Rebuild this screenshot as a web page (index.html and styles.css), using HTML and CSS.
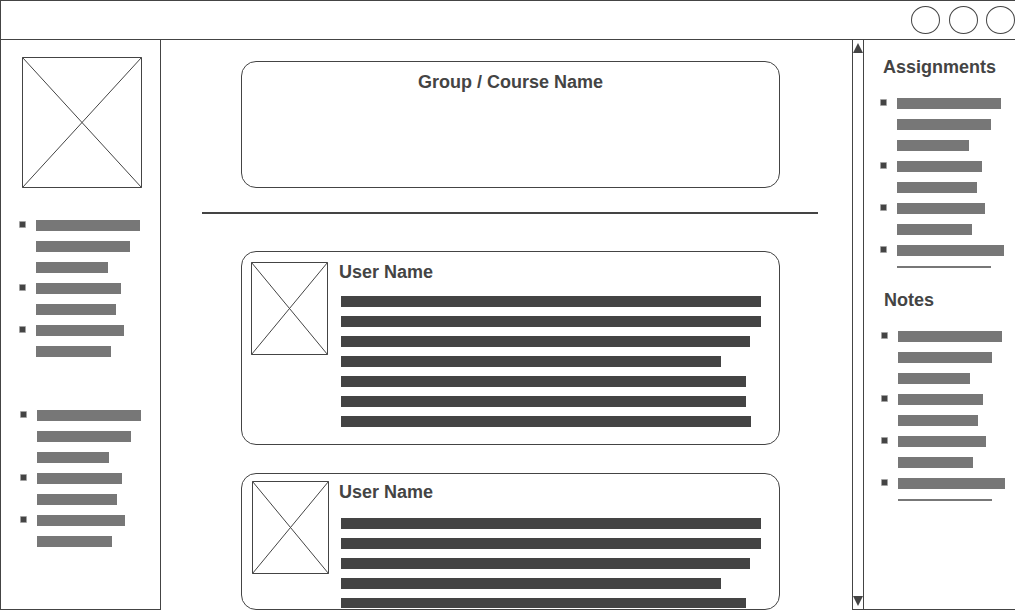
FILE: index.html
```html
<!DOCTYPE html>
<html lang="en">
<head>
<meta charset="utf-8">
<meta name="viewport" content="width=device-width, initial-scale=1">
<title>Group / Course Name</title>
<link rel="stylesheet" href="styles.css">
</head>
<body>
<div class="app">
  <header class="topbar">
    <button class="round" type="button" aria-label="Messages"></button>
    <button class="round" type="button" aria-label="Alerts"></button>
    <button class="round round-last" type="button" aria-label="Account"></button>
  </header>

  <nav class="sidebar" aria-label="Main">
    <svg class="placeholder portrait" viewBox="0 0 120 131" preserveAspectRatio="none" aria-hidden="true"><path d="M.5 .5H119.5V130.5H.5ZL119.5 130.5M119.5 .5L.5 130.5"/></svg>
    <ul class="list">
      <li><span class="bar w104"></span><span class="bar w94"></span><span class="bar w72"></span></li>
      <li><span class="bar w85"></span><span class="bar w80"></span></li>
      <li><span class="bar w88"></span><span class="bar w75"></span></li>
    </ul>
    <ul class="list list-second">
      <li><span class="bar w104"></span><span class="bar w94"></span><span class="bar w72"></span></li>
      <li><span class="bar w85"></span><span class="bar w80"></span></li>
      <li><span class="bar w88"></span><span class="bar w75"></span></li>
    </ul>
  </nav>

  <main class="feed">
    <section class="card banner"><h1 class="title">Group / Course Name</h1></section>
    <hr class="divider">
    <article class="card post">
      <svg class="placeholder avatar" viewBox="0 0 77 93" preserveAspectRatio="none" aria-hidden="true"><path d="M.5 .5H76.5V92.5H.5ZL76.5 92.5M76.5 .5L.5 92.5"/></svg>
      <div class="post-body">
        <h2 class="title">User Name</h2>
        <div class="lines">
          <span class="line w420"></span><span class="line w420"></span><span class="line w409"></span><span class="line w380"></span><span class="line w405"></span><span class="line w405"></span><span class="line w410"></span>
        </div>
      </div>
    </article>
    <article class="card post post-cut">
      <svg class="placeholder avatar" viewBox="0 0 77 93" preserveAspectRatio="none" aria-hidden="true"><path d="M.5 .5H76.5V92.5H.5ZL76.5 92.5M76.5 .5L.5 92.5"/></svg>
      <div class="post-body">
        <h2 class="title">User Name</h2>
        <div class="lines">
          <span class="line w420"></span><span class="line w420"></span><span class="line w409"></span><span class="line w380"></span><span class="line w405"></span><span class="line w405"></span><span class="line w410"></span>
        </div>
      </div>
    </article>
  </main>

  <div class="scrollbar">
    <button class="arrow" type="button" aria-label="Scroll up"><svg viewBox="0 0 10 10" aria-hidden="true"><path d="M5 0L10 10H0Z"/></svg></button>
    <button class="arrow" type="button" aria-label="Scroll down"><svg viewBox="0 0 10 10" aria-hidden="true"><path d="M0 0H10L5 10Z"/></svg></button>
  </div>

  <aside class="rail">
    <section class="rail-section">
      <h2 class="title">Assignments</h2>
      <ul class="list">
        <li><span class="bar w104"></span><span class="bar w94"></span><span class="bar w72"></span></li>
        <li><span class="bar w85"></span><span class="bar w80"></span></li>
        <li><span class="bar w88"></span><span class="bar w75"></span></li>
        <li><span class="bar w107"></span><span class="bar thin w94"></span></li>
      </ul>
    </section>
    <section class="rail-section rail-notes">
      <h2 class="title">Notes</h2>
      <ul class="list">
        <li><span class="bar w104"></span><span class="bar w94"></span><span class="bar w72"></span></li>
        <li><span class="bar w85"></span><span class="bar w80"></span></li>
        <li><span class="bar w88"></span><span class="bar w75"></span></li>
        <li><span class="bar w107"></span><span class="bar thin w94"></span></li>
      </ul>
    </section>
  </aside>
</div>
</body>
</html>
```
FILE: styles.css
```css
:root {
  --ink: #444;
  --bar: #777;
}

*,
*::before {
  box-sizing: border-box;
}

body {
  margin: 0;
  background: #fff;
  color: var(--ink);
  font-family: "Liberation Sans", Arial, sans-serif;
}

button {
  padding: 0;
  background: none;
  border: 0;
}

.app {
  display: grid;
  grid-template-columns: 161px minmax(0, 1fr) 12px 151px;
  grid-template-rows: 40px minmax(0, 1fr);
  height: 100vh;
}

.title {
  margin: 0;
  font-size: 18px;
  line-height: 20px;
  font-weight: bold;
}

/* Top bar */
.topbar {
  grid-column: 1 / -1;
  display: flex;
  justify-content: flex-end;
  align-items: center;
  gap: 9px;
  border: 1px solid var(--ink);
  border-right: 0;
}

.round {
  width: 29px;
  height: 28px;
  border: 1px solid var(--ink);
  border-radius: 50%;
}

.round-last {
  margin-left: -1px;
}

/* Image placeholders */
.placeholder {
  display: block;
  flex: none;
  fill: none;
  stroke: var(--ink);
  stroke-width: 1;
}

.portrait {
  width: 120px;
  height: 131px;
  margin: 0 0 32px 2px;
}

.avatar {
  width: 77px;
  height: 93px;
}

/* Left column */
.sidebar {
  padding: 17px 0 0 19px;
  border: 1px solid var(--ink);
  border-top: 0;
  overflow: hidden;
}

/* Bulleted bars */
.list {
  display: grid;
  gap: 10px;
  margin: 0;
  padding: 0;
  list-style: none;
}

.list-second {
  margin: 53px 0 0 1px;
}

.list li {
  display: grid;
  gap: 10px;
  position: relative;
  padding-left: 16px;
}

.list li::before {
  content: "";
  position: absolute;
  top: 1px;
  left: -1px;
  width: 7px;
  height: 7px;
  background: var(--ink);
  background-clip: padding-box;
  border: 1px solid rgb(68 68 68 / 50%);
  border-radius: 1px;
}

.bar {
  height: 11px;
  background: var(--bar);
}

.thin {
  height: 2px;
}

.w72 { width: 72px; }
.w75 { width: 75px; }
.w80 { width: 80px; }
.w85 { width: 85px; }
.w88 { width: 88px; }
.w94 { width: 94px; }
.w104 { width: 104px; }
.w107 { width: 107px; }

/* Feed */
.feed {
  display: flex;
  flex-direction: column;
  padding: 21px 34px 0 41px;
}

.card {
  margin: 0 38px 0 39px;
  border: 1px solid var(--ink);
  border-radius: 15px;
}

.banner {
  min-height: 127px;
  padding-top: 10px;
  text-align: center;
}

.divider {
  width: 100%;
  height: 2px;
  margin: 24px 0 37px;
  border: 0;
  background: var(--ink);
}

.post {
  display: flex;
  gap: 11px;
  padding: 10px 17px 17px 9px;
}

.post-body {
  display: flex;
  flex-direction: column;
  flex: 1;
  gap: 14px;
  min-width: 0;
}

.lines {
  display: grid;
  align-content: start;
  gap: 9px;
  padding-left: 2px;
  min-height: 0;
  overflow: hidden;
}

.line {
  max-width: 100%;
  height: 11px;
  background: var(--ink);
}

.w380 { width: 380px; }
.w405 { width: 405px; }
.w409 { width: 409px; }
.w410 { width: 410px; }
.w420 { width: 420px; }

.post-cut {
  flex: 1;
  gap: 10px;
  min-height: 0;
  margin-top: 28px;
  padding: 7px 17px 1px 10px;
}

.post-cut .post-body {
  gap: 16px;
  padding-top: 1px;
}

/* Scrollbar */
.scrollbar {
  display: flex;
  flex-direction: column;
  justify-content: space-between;
  padding: 3px 0;
  border: 1px solid var(--ink);
  border-top: 0;
}

.arrow,
.arrow svg {
  display: block;
  width: 10px;
  height: 10px;
  fill: var(--ink);
}

/* Right column */
.rail {
  display: flex;
  flex-direction: column;
  gap: 22px;
  padding: 17px 0 0 17px;
  border-bottom: 1px solid var(--ink);
  overflow: hidden;
}

.rail-section {
  display: grid;
  gap: 21px;
}

.rail-section .title {
  padding-left: 2px;
}

.rail-notes {
  margin-left: 1px;
}
```
